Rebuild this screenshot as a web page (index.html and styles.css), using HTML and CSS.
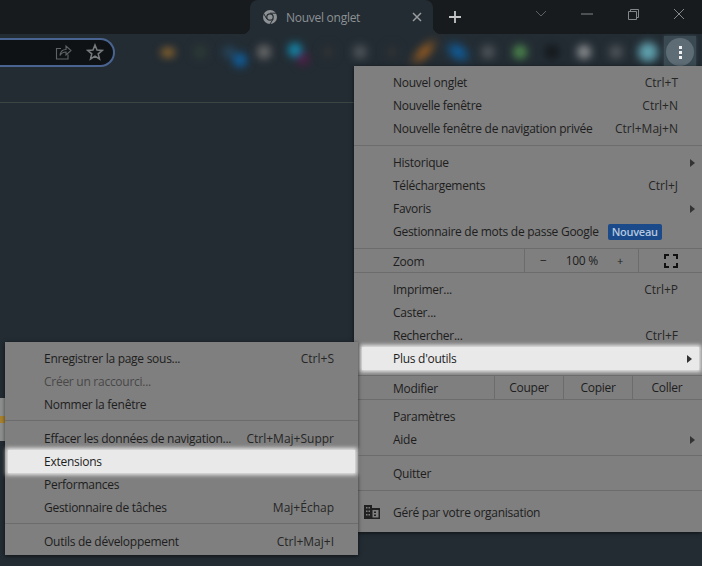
FILE: index.html
```html
<!DOCTYPE html>
<html lang="fr">
<head>
    <meta charset="UTF-8">
    <meta name="viewport" content="width=device-width, initial-scale=1.0">
    <title>Nouvel onglet</title>
    <link rel="stylesheet" href="styles.css">
</head>
<body>
    <div class="window">
        <div class="tabstrip">
            <div class="tab">
                <svg class="tab-logo" width="16" height="16" viewBox="0 0 16 16">
                    <circle cx="8" cy="8" r="7" fill="#8f9294"/>
                    <circle cx="8" cy="8" r="3.8" fill="#232c33"/>
                    <circle cx="8" cy="8" r="2.6" fill="#8f9294"/>
                    <path d="M8 4.2H14.4M4.7 9.9L1.6 4.4M11.3 9.9L8 15" stroke="#232c33" stroke-width="1" fill="none"/>
                </svg>
                <span class="tab-title">Nouvel onglet</span>
                <svg class="tab-close" width="10" height="10" viewBox="0 0 10 10">
                    <path d="M1 1L9 9M9 1L1 9" stroke="#9a9d9f" stroke-width="1.5"/>
                </svg>
            </div>
            <svg class="new-tab" width="12" height="12" viewBox="0 0 12 12">
                <path d="M6 0V12M0 6H12" stroke="#c3c5c6" stroke-width="1.8"/>
            </svg>
            <div class="win-controls">
                <svg width="46" height="12" viewBox="0 0 46 12"><path d="M18 3L23 8L28 3" stroke="#5c6165" fill="none"/></svg>
                <svg width="46" height="12" viewBox="0 0 46 12"><path d="M17 6H29" stroke="#83878a"/></svg>
                <svg width="46" height="12" viewBox="0 0 46 12"><path d="M18.5 3.5H26.5V11.5H18.5ZM20.5 3V1.5H28.5V9.5H27" stroke="#83878a" fill="none"/></svg>
                <svg width="46" height="12" viewBox="0 0 46 12"><path d="M18 1L28 11M28 1L18 11" stroke="#83878a"/></svg>
            </div>
        </div>

        <div class="toolbar">
            <div class="omnibox">
                <svg width="18" height="18" viewBox="0 0 18 18">
                    <path d="M7 5.5H2.5V16H14V11.5M6 12.5C6.5 8.5 9 6.5 12 6.5V3L17 7.5L12 12V9C9.500 9 7.500 10 6 12.500Z" stroke="#5f6366" stroke-width="1.100" fill="none"/>
                </svg>
                <svg width="18" height="18" viewBox="0 0 18 18">
                    <path d="M9 2L11 7.100L16.300 7.400L12.200 10.800L13.500 16L9 13.100L4.500 16L5.800 10.800L1.700 7.400L7 7.100Z" stroke="#787b7d" stroke-width="1.500" fill="none"/>
                </svg>
            </div>
            <div class="ext-icons">
                <span class="ext"><i class="blob orange"></i></span>
                <span class="ext"><i class="blob darkgreen"></i></span>
                <span class="ext"><i class="blob blue pair"></i></span>
                <span class="ext"><i class="blob gray"></i></span>
                <span class="ext"><i class="blob cyan"></i></span>
                <span class="ext"><i class="blob dark"></i></span>
                <span class="ext"><i class="blob gray dim"></i></span>
                <span class="ext"><i class="blob dark"></i></span>
                <span class="ext"><i class="blob flame"></i></span>
                <span class="ext"><i class="blob blue wide"></i></span>
                <span class="ext"><i class="blob gray dim"></i></span>
                <span class="ext"><i class="blob green"></i></span>
                <span class="ext"><i class="blob black"></i></span>
                <span class="ext"><i class="blob light"></i></span>
                <span class="ext"><i class="blob gray dim"></i></span>
                <span class="ext"><i class="blob teal"></i></span>
            </div>
            <div class="menu-button">
                <span class="dots"><i></i><i></i><i></i></span>
            </div>
        </div>

        <div class="bookmarks"></div>
        <div class="page">
            <div class="page-sliver"><span class="sliver-mark"></span></div>
        </div>
    </div>

    <div class="menu main-menu">
        <div class="item"><span>Nouvel onglet</span><span class="key">Ctrl+T</span></div>
        <div class="item"><span>Nouvelle fenêtre</span><span class="key">Ctrl+N</span></div>
        <div class="item"><span>Nouvelle fenêtre de navigation privée</span><span class="key">Ctrl+Maj+N</span></div>
        <div class="sep"></div>
        <div class="item"><span>Historique</span><span class="arrow"></span></div>
        <div class="item"><span>Téléchargements</span><span class="key">Ctrl+J</span></div>
        <div class="item"><span>Favoris</span><span class="arrow"></span></div>
        <div class="item start"><span>Gestionnaire de mots de passe Google</span><span class="badge">Nouveau</span></div>
        <div class="sep no-bottom"></div>
        <div class="cell-row zoom-row">
            <span class="cell-label">Zoom</span>
            <div class="zoom-cell">
                <span>−</span><span>100 %</span><span class="plus">+</span>
            </div>
            <div class="full-cell">
                <svg width="14" height="14" viewBox="0 0 14 14">
                    <path d="M1 5V1H5M9 1H13V5M13 9V13H9M5 13H1V9" stroke="#111" stroke-width="2" fill="none"/>
                </svg>
            </div>
        </div>
        <div class="sep no-top"></div>
        <div class="item"><span>Imprimer...</span><span class="key">Ctrl+P</span></div>
        <div class="item"><span>Caster...</span></div>
        <div class="item"><span>Rechercher...</span><span class="key">Ctrl+F</span></div>
        <div class="item active"><span>Plus d'outils</span><span class="arrow"></span></div>
        <div class="sep no-bottom"></div>
        <div class="cell-row edit-row">
            <span class="cell-label">Modifier</span>
            <span class="edit-cell">Couper</span>
            <span class="edit-cell">Copier</span>
            <span class="edit-cell">Coller</span>
        </div>
        <div class="sep no-top"></div>
        <div class="item"><span>Paramètres</span></div>
        <div class="item"><span>Aide</span><span class="arrow"></span></div>
        <div class="sep tight"></div>
        <div class="item"><span>Quitter</span></div>
        <div class="sep"></div>
        <div class="item managed">
            <svg class="org-icon" width="16" height="14" viewBox="0 0 16 14">
                <path d="M0 0H8V3H16V14H0Z" fill="#222"/>
                <path d="M2 2H3.500V3.500H2ZM4.500 2H6V3.500H4.500ZM2 5.500H3.500V7H2ZM4.500 5.500H6V7H4.500ZM2 9H3.500V10.500H2ZM4.500 9H6V10.500H4.500ZM8.500 5H14.500V12.500H8.500Z" fill="#7f7f7f"/>
                <path d="M10 6.500H12V8H10ZM10 9.500H12V11H10Z" fill="#222"/>
            </svg>
            <span>Géré par votre organisation</span>
        </div>
    </div>

    <div class="menu sub-menu">
        <div class="item"><span>Enregistrer la page sous...</span><span class="key">Ctrl+S</span></div>
        <div class="item disabled"><span>Créer un raccourci...</span></div>
        <div class="item"><span>Nommer la fenêtre</span></div>
        <div class="sep tight"></div>
        <div class="item"><span>Effacer les données de navigation...</span><span class="key">Ctrl+Maj+Suppr</span></div>
        <div class="item active"><span>Extensions</span></div>
        <div class="item"><span>Performances</span></div>
        <div class="item"><span>Gestionnaire de tâches</span><span class="key">Maj+Échap</span></div>
        <div class="sep tight"></div>
        <div class="item"><span>Outils de développement</span><span class="key">Ctrl+Maj+I</span></div>
    </div>
</body>
</html>
```

FILE: styles.css
```css
* {
    box-sizing: border-box;
}
html, body {
    height: 100%;
}
body {
    margin: 0;
    background-color: #232c33;
    font-family: 'Open Sans', 'Noto Sans', sans-serif;
    font-size: 12px;
    letter-spacing: -0.27px;
    color: #1d1d1d;
    overflow: hidden;
}
.window {
    height: 566px;
    display: flex;
    flex-direction: column;
}

/* tab strip */
.tabstrip {
    height: 34px;
    flex-shrink: 0;
    display: flex;
    align-items: center;
    padding-left: 250px;
    background-color: #171b1e;
}
.tab {
    position: relative;
    width: 183px;
    height: 34px;
    display: flex;
    align-items: center;
    padding: 0 11px 0 12px;
    background-color: #232c33;
    border-radius: 8px 8px 0 0;
}
.tab::before, .tab::after {
    content: "";
    position: absolute;
    bottom: 0;
    width: 8px;
    height: 8px;
}
.tab::before {
    left: -8px;
    background: radial-gradient(circle at 0 0, transparent 8px, #232c33 8.5px);
}
.tab::after {
    right: -8px;
    background: radial-gradient(circle at 100% 0, transparent 8px, #232c33 8.5px);
}
.tab-title {
    flex: 1;
    margin-left: 8px;
    color: #8d9194;
}
.new-tab {
    margin-left: 16px;
}
.win-controls {
    display: flex;
    margin-left: auto;
    height: 34px;
    padding-top: 8px;
}

/* toolbar */
.toolbar {
    height: 36px;
    flex-shrink: 0;
    display: flex;
    align-items: center;
}
.omnibox {
    width: 115px;
    height: 29px;
    display: flex;
    align-items: center;
    justify-content: flex-end;
    gap: 14px;
    padding-right: 9px;
    background-color: #0f1214;
    border: 2px solid #4a6492;
    border-left: none;
    border-radius: 0 15px 15px 0;
}
.ext-icons {
    display: flex;
    margin-left: 37px;
}
.ext {
    width: 32px;
    height: 32px;
    display: flex;
    align-items: center;
    justify-content: center;
}
.blob {
    position: relative;
    display: block;
    width: 14px;
    height: 14px;
    border-radius: 50%;
    filter: blur(4px);
}
.orange { background-color: #9a6c2c; height: 9px; }
.darkgreen { background-color: #2c3a36; }
.blue { background-color: #0f5f9f; }
.pair { transform: translate(8px, 8px); }
.pair::after {
    content: "";
    position: absolute;
    left: -10px;
    top: -7px;
    width: 12px;
    height: 12px;
    border-radius: 50%;
    background-color: #26465e;
}
.wide { transform: translate(2px, 0) rotate(35deg) scaleX(1.400); }
.gray { background-color: #6a6a6a; }
.cyan { background-color: #128bb0; transform: translate(-1px, -2px); }
.cyan::after {
    content: "";
    position: absolute;
    left: 9px;
    top: 10px;
    width: 12px;
    height: 12px;
    border-radius: 50%;
    background-color: #541c48;
}
.dark { background-color: #2d3234; }
.dim { background-color: #50565a; }
.flame { background-color: #a5611f; transform: rotate(45deg) scaleY(1.700); width: 10px; }
.green { background-color: #4e8a4e; }
.black { background-color: #12171a; }
.light { background-color: #8f9294; }
.teal { background-color: #5f9fad; width: 20px; height: 20px; }
.menu-button {
    width: 32px;
    height: 32px;
    display: flex;
    align-items: center;
    justify-content: center;
    background-color: #3b4a52;
    box-shadow: 0 0 3px #3b4a52;
}
.dots {
    width: 28px;
    height: 28px;
    display: flex;
    flex-direction: column;
    align-items: center;
    justify-content: center;
    gap: 2px;
    border-radius: 50%;
    background-color: #5d6c75;
}
.dots i {
    width: 3px;
    height: 3px;
    background-color: #f2f2f2;
}

.bookmarks {
    height: 33px;
    flex-shrink: 0;
    border-bottom: 1px solid #3a4544;
}
.page {
    flex: 1;
    position: relative;
}
.page-sliver {
    position: absolute;
    left: 0;
    top: 295px;
    width: 5px;
    height: 43px;
    display: flex;
    align-items: center;
    background-color: #8e9090;
}
.sliver-mark {
    width: 5px;
    height: 7px;
    background-color: #a9822f;
}

/* menus */
.menu {
    position: absolute;
    background-color: #7f7f7f;
    box-shadow: 0 1px 4px rgba(0, 0, 0, 0.6);
}
.main-menu {
    left: 354px;
    top: 66px;
    width: 348px;
    height: 466px;
    padding-top: 5px;
}
.sub-menu {
    left: 5px;
    top: 342px;
    width: 353px;
    height: 213px;
    padding-top: 5px;
}
.item {
    height: 23px;
    display: flex;
    align-items: center;
    justify-content: space-between;
    padding: 0 24px 0 39px;
}
.item.start {
    justify-content: flex-start;
    gap: 9px;
}
.item.disabled {
    color: #484848;
}
.item.active {
    background-color: #e9e9e9;
    box-shadow: 0 0 4px 2px #e9e9e9;
    margin: 0 3px 0 8px;
    padding-left: 31px;
    padding-right: 21px;
}
.sub-menu .item.active {
    margin: 0 3px;
    padding-left: 36px;
    position: relative;
}
.key {
    color: #262626;
    letter-spacing: 0;
}
.arrow {
    width: 0;
    height: 0;
    margin-right: -17px;
    border-left: 5px solid #333;
    border-top: 4px solid transparent;
    border-bottom: 4px solid transparent;
}
.active .arrow {
    margin-right: -14px;
}
.badge {
    height: 16px;
    line-height: 16px;
    padding: 0 4px;
    border-radius: 2px;
    background-color: #1a4a8a;
    color: #b5c7de;
    font-size: 11px;
    font-weight: 600;
}
.sep {
    height: 1px;
    margin: 5px 0;
    background-color: #6c6c6c;
}
.sep.tight {
    margin: 4px 0 6px;
}
.sep.no-top {
    margin-top: 0;
}
.sep.no-bottom {
    margin-bottom: 0;
}
.cell-row {
    height: 23px;
    display: flex;
    align-items: stretch;
}
.edit-row {
    padding-right: 1px;
}
.cell-label {
    flex: 1;
    display: flex;
    align-items: center;
    padding: 1px 0 0 39px;
}
.zoom-cell {
    width: 115px;
    display: flex;
    align-items: center;
    justify-content: space-between;
    padding: 0 15px;
    border-left: 1px solid #6c6c6c;
    border-right: 1px solid #6c6c6c;
}
.plus {
    font-size: 11px;
}
.full-cell {
    width: 63px;
    display: flex;
    align-items: center;
    justify-content: center;
}
.edit-cell {
    width: 69px;
    display: flex;
    align-items: center;
    justify-content: center;
    border-left: 1px solid #6c6c6c;
}
.managed {
    height: 32px;
    justify-content: flex-start;
    position: relative;
}
.org-icon {
    position: absolute;
    left: 10px;
    top: 9px;
}
```
